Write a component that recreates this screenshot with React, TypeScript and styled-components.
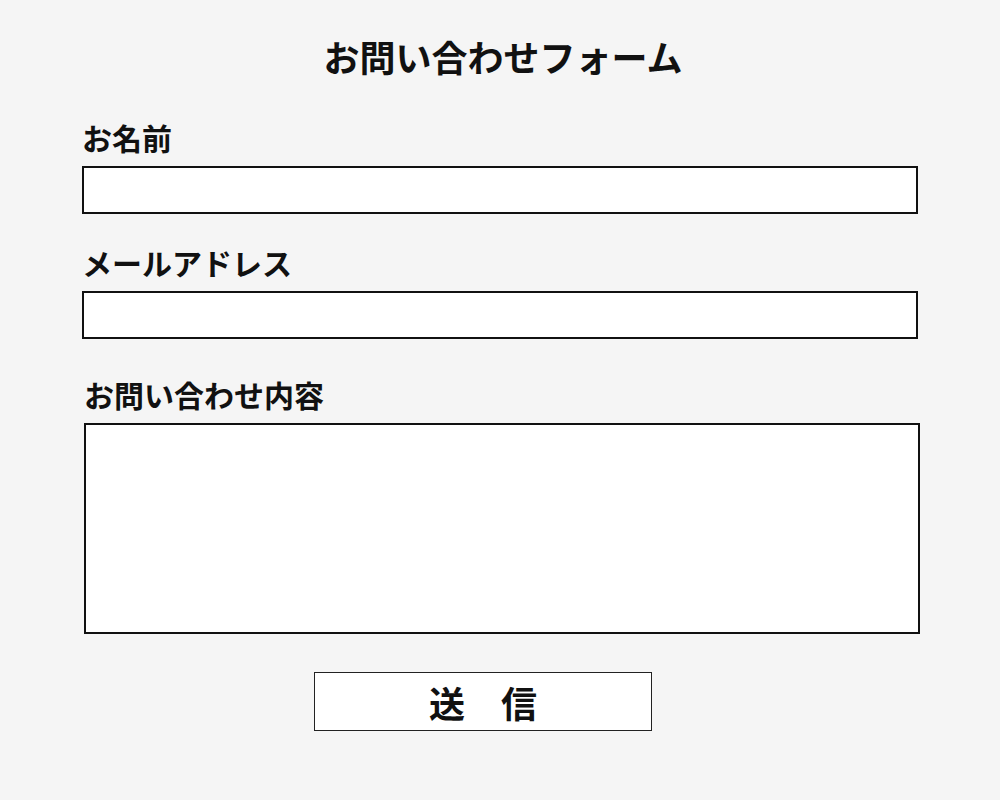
import styled, { createGlobalStyle } from "styled-components";

const GlobalStyle = createGlobalStyle`
  html, body {
    margin: 0;
    padding: 0;
    background: #f5f5f5;
  }
  body {
    font-family: "Noto Sans CJK JP", "Noto Sans", sans-serif;
    color: #111;
  }
`;

const Page = styled.div`
  min-height: 800px;
  padding-top: 35px;
  box-sizing: border-box;
`;

const Title = styled.h1`
  margin: 0;
  padding-left: 6px;
  text-align: center;
  font-size: 36px;
  line-height: 43px;
  font-weight: 700;
`;

const Form = styled.form`
  width: 836px;
  margin-left: 82px;
  display: flex;
  flex-direction: column;
`;

// $shift nudges a field right without shrinking it
const Field = styled.div<{ $top: number; $shift?: number }>`
  display: flex;
  flex-direction: column;
  margin-top: ${(p) => p.$top}px;
  margin-left: ${(p) => p.$shift ?? 0}px;
  margin-right: ${(p) => -(p.$shift ?? 0)}px;
`;

const Label = styled.label`
  font-size: 30px;
  line-height: 40px;
  font-weight: 700;
  margin-bottom: 9px;
`;

const Input = styled.input`
  height: 48px;
  box-sizing: border-box;
  border: 2px solid #111;
  background: #fff;
  border-radius: 0;
  outline: none;
  font-size: 18px;
  padding: 0 10px;
`;

const TextArea = styled.textarea`
  height: 211px;
  box-sizing: border-box;
  border: 2px solid #111;
  background: #fff;
  border-radius: 0;
  outline: none;
  resize: none;
  font-size: 18px;
  padding: 10px;
`;

const SubmitButton = styled.button`
  align-self: flex-start;
  margin: 38px 0 0 232px;
  width: 338px;
  height: 59px;
  box-sizing: border-box;
  border: 1.5px solid #222;
  background: #fff;
  font-family: inherit;
  font-size: 36px;
  font-weight: 700;
  line-height: 1;
  color: #111;
  padding: 0;
  cursor: pointer;
`;

export default function App() {
  return (
    <Page>
      <GlobalStyle />
      <Title>お問い合わせフォーム</Title>
      <Form onSubmit={(e) => e.preventDefault()}>
        <Field $top={39}>
          <Label htmlFor="name">お名前</Label>
          <Input id="name" type="text" />
        </Field>
        <Field $top={28}>
          <Label htmlFor="email">メールアドレス</Label>
          <Input id="email" type="email" />
        </Field>
        <Field $top={35} $shift={2}>
          <Label htmlFor="message">お問い合わせ内容</Label>
          <TextArea id="message" />
        </Field>
        <SubmitButton type="submit">送　信</SubmitButton>
      </Form>
    </Page>
  );
}
